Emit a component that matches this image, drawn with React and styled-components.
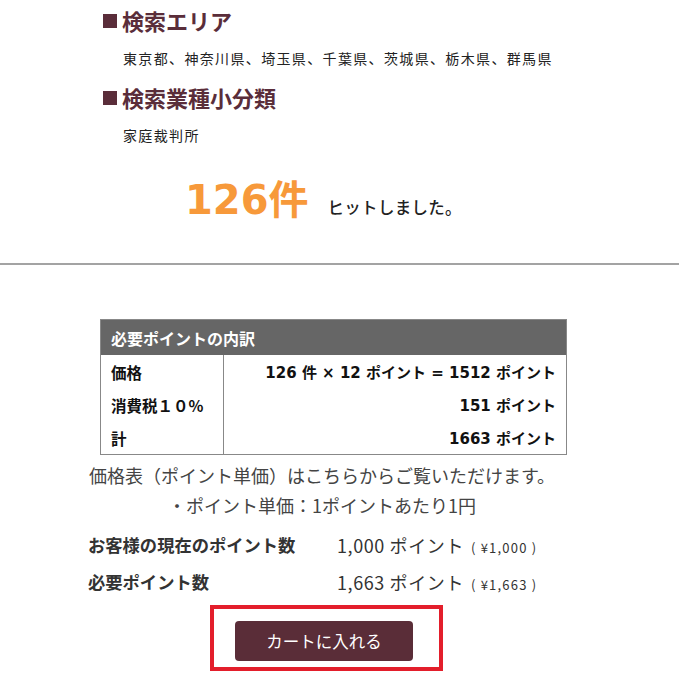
import React from 'react'
import styled, { createGlobalStyle } from 'styled-components'

const GlobalStyle = createGlobalStyle`
  body {
    margin: 0;
    background: #fff;
    font-family: "Noto Sans CJK JP", "Noto Sans", sans-serif;
    color: #333;
  }
`

const Page = styled.div`
  width: 679px;
  height: 675px;
  overflow: hidden;
`

const Conditions = styled.section`
  padding: 5px 0 0 103px;
`

const Heading = styled.h2`
  display: flex;
  align-items: center;
  margin: ${({ $first }) => ($first ? '0' : '13px')} 0 0;
  font-size: 22px;
  line-height: 30px;
  font-weight: 700;
  color: #5a2d3a;
`

const Square = styled.span`
  display: inline-block;
  width: 14px;
  height: 14px;
  margin: 2px 5px 0 0;
  background: #5a2d3a;
`

const Value = styled.p`
  margin: 12px 0 0 20px;
  font-size: 14px;
  line-height: 22px;
  letter-spacing: 1.35px;
  color: #222;
`

const HitRow = styled.div`
  display: flex;
  align-items: baseline;
  gap: 19px;
  margin: 29px 0 0 82px;
  height: 50px;
`

const Count = styled.span`
  font-family: "DejaVu Sans", "Noto Sans CJK JP", sans-serif;
  font-size: 40px;
  line-height: 50px;
  font-weight: 700;
  color: #f7993a;
`

const HitText = styled.span`
  font-size: 16.5px;
  font-weight: 500;
  letter-spacing: 0.3px;
  color: #222;
`

const Rule = styled.hr`
  margin: 38px 0 0;
  border: 0;
  border-top: 2px solid #a3a3a3;
`

const Breakdown = styled.table`
  margin: 54px 0 0 100px;
  width: 467px;
  border-collapse: collapse;
  border: 1px solid #888;
  font-family: "DejaVu Sans", "Noto Sans CJK JP", sans-serif;
  font-size: 15px;
  font-weight: 700;
  color: #111;
`

const HeadCell = styled.th`
  background: #666;
  color: #fff;
  text-align: left;
  height: 35px;
  padding: 0 10px;
  font-family: "Noto Sans CJK JP", sans-serif;
  font-size: 16px;
`

const Cell = styled.td`
  height: 33px;
  padding: 0 10px;
  text-align: ${({ $right }) => ($right ? 'right' : 'left')};
  width: ${({ $label }) => ($label ? '102px' : 'auto')};
  border-right: ${({ $label }) => ($label ? '1px solid #888' : '0')};
  font-family: ${({ $label }) => ($label ? '"Noto Sans CJK JP", sans-serif' : 'inherit')};
  font-size: ${({ $label }) => ($label ? '15.5px' : '15px')};
`

const Notes = styled.div`
  margin: 5px 0 0 88px;
  width: 468px;
  text-align: center;
  font-size: 18px;
  line-height: 30px;
  color: #444;
`

const Summary = styled.div`
  display: grid;
  grid-template-columns: 249px auto;
  grid-auto-rows: 37px;
  align-items: center;
  margin: 6px 0 0 88px;
`

const SumLabel = styled.span`
  font-size: 17.3px;
  font-weight: 700;
  color: #333;
`

const SumValue = styled.span`
  font-size: 18px;
  letter-spacing: 0.6px;
  color: #333;
`

const Yen = styled.small`
  font-size: 13px;
  margin-left: 7px;
  letter-spacing: 1.2px;
`

const Highlight = styled.div`
  margin: 5px 0 0 210px;
  width: 233px;
  box-sizing: border-box;
  border: 4px solid #e31e2b;
  padding: 12px 26px 6px 21px;
`

const CartButton = styled.button`
  display: block;
  width: 178px;
  height: 40px;
  border: 0;
  border-radius: 4px;
  background: #5a2d38;
  color: #fff;
  font-family: "Noto Sans CJK JP", sans-serif;
  font-size: 16.5px;
  cursor: pointer;
`

const rows = [
  { label: '価格', value: '126 件 × 12 ポイント = 1512 ポイント' },
  { label: '消費税１０%', value: '151 ポイント' },
  { label: '計', value: '1663 ポイント' },
]

export default function App() {
  return (
    <Page>
      <GlobalStyle />
      <Conditions>
        <Heading $first><Square />検索エリア</Heading>
        <Value>東京都、神奈川県、埼玉県、千葉県、茨城県、栃木県、群馬県</Value>
        <Heading><Square />検索業種小分類</Heading>
        <Value>家庭裁判所</Value>
        <HitRow>
          <Count>126件</Count>
          <HitText>ヒットしました。</HitText>
        </HitRow>
      </Conditions>
      <Rule />
      <Breakdown>
        <thead>
          <tr>
            <HeadCell colSpan={2}>必要ポイントの内訳</HeadCell>
          </tr>
        </thead>
        <tbody>
          {rows.map((r) => (
            <tr key={r.label}>
              <Cell $label>{r.label}</Cell>
              <Cell $right>{r.value}</Cell>
            </tr>
          ))}
        </tbody>
      </Breakdown>
      <Notes>
        <div>価格表（ポイント単価）はこちらからご覧いただけます。</div>
        <div>・ポイント単価：1ポイントあたり1円</div>
      </Notes>
      <Summary>
        <SumLabel>お客様の現在のポイント数</SumLabel>
        <SumValue>1,000 ポイント<Yen>( ¥1,000 )</Yen></SumValue>
        <SumLabel>必要ポイント数</SumLabel>
        <SumValue>1,663 ポイント<Yen>( ¥1,663 )</Yen></SumValue>
      </Summary>
      <Highlight>
        <CartButton>カートに入れる</CartButton>
      </Highlight>
    </Page>
  )
}
